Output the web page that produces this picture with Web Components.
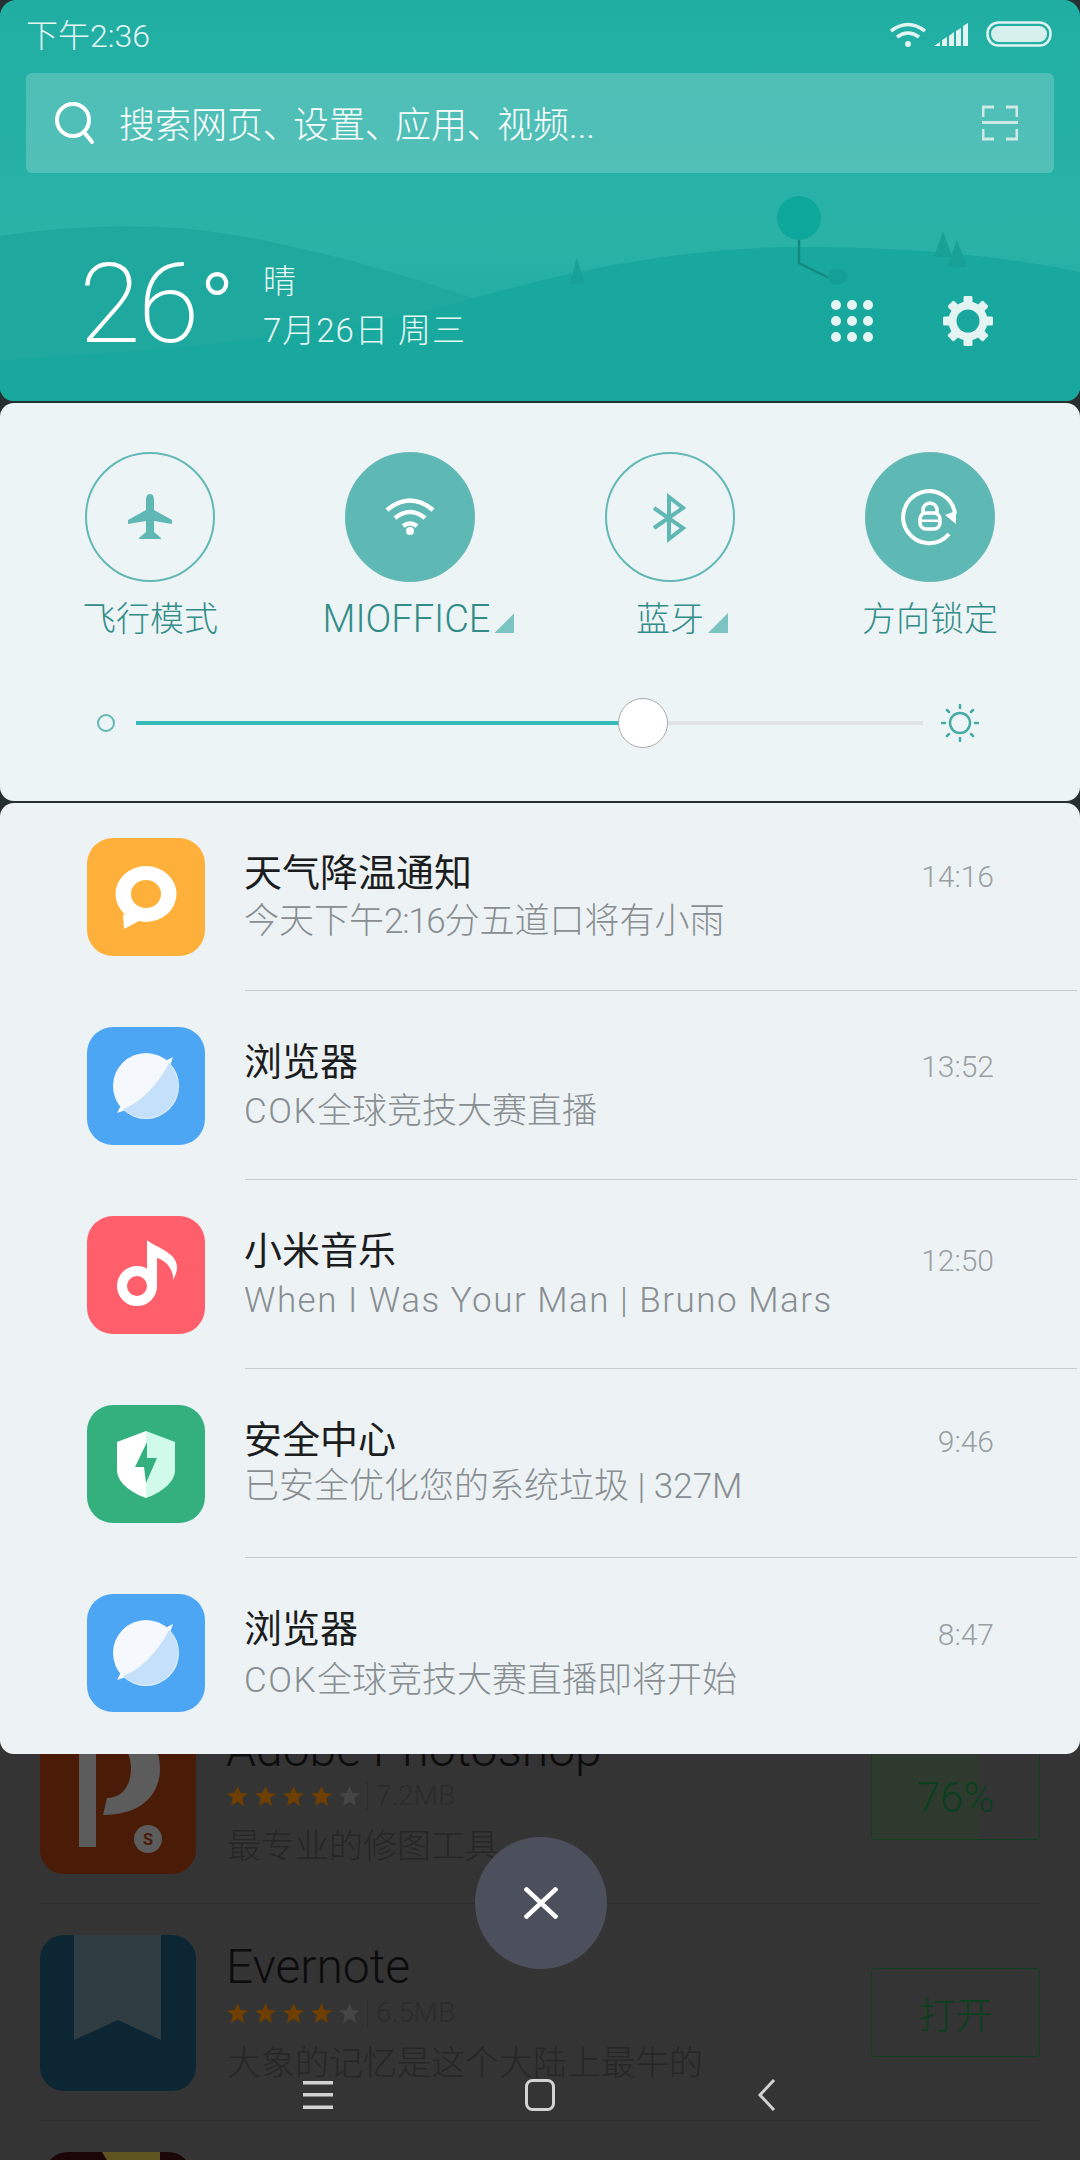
<!DOCTYPE html>
<html lang="zh">
<head>
<meta charset="utf-8">
<style>
    html, body {
        margin: 0;
        padding: 0;
    }

    body {
        position: relative;
        width: 1080px;
        height: 2160px;
        overflow: hidden;
        background: #343434;
        font-family: Roboto, "Noto Sans CJK SC", sans-serif;
    }

    .lat {
        letter-spacing: 1.5px;
    }

    .tight {
        letter-spacing: -1.3px;
    }
</style>
</head>
<body>
<bg-list>
    <bg-row app="ps" size="7.2MB" button="76%" progress="64"><span slot="name">Adobe Photoshop</span><span slot="desc">最专业的修图工具</span></bg-row>
    <bg-row app="evernote" size="6.5MB" button="打开"><span slot="name">Evernote</span><span slot="desc">大象的记忆是这个大陆上最牛的</span></bg-row>
    <bg-row app="third"></bg-row>
</bg-list>

<notif-shade>
    <weather-header></weather-header>
    <quick-panel>
        <toggle-button icon="plane" label="飞行模式"></toggle-button>
        <toggle-button icon="wifi" label="MIOFFICE" on more latin></toggle-button>
        <toggle-button icon="bluetooth" label="蓝牙" more></toggle-button>
        <toggle-button icon="lock" label="方向锁定" on></toggle-button>
    </quick-panel>
    <notif-list>
        <notif-row icon="weather" time="14:16" shift="39" dy="0"><span slot="title">天气降温通知</span><span slot="sub">今天下午<span class="tight">2:16</span>分五道口将有小雨</span></notif-row>
        <notif-row icon="browser" time="13:52" shift="40" dy="1"><span slot="title">浏览器</span><span slot="sub"><span class="lat">COK</span>全球竞技大赛直播</span></notif-row>
        <notif-row icon="music" time="12:50" shift="45" dy="1"><span slot="title">小米音乐</span><span slot="sub" class="lat">When I Was Your Man | Bruno Mars</span></notif-row>
        <notif-row icon="shield" time="9:46" shift="37" dy="-2"><span slot="title">安全中心</span><span slot="sub">已安全优化您的系统垃圾 | 327M</span></notif-row>
        <notif-row icon="browser" time="8:47" shift="41" dy="3"><span slot="title">浏览器</span><span slot="sub"><span class="lat">COK</span>全球竞技大赛直播即将开始</span></notif-row>
    </notif-list>
</notif-shade>

<close-button></close-button>
<nav-keys></nav-keys>

<script>
const toggleIcons = {
    plane: `<path fill="#5fb8b4" d="M65 42c-3 0-4 3-4 6v10L43 68v4l18-3v11l-7 6v1h22v-1l-7-6V69l18 3v-4L69 58V48c0-3-1-6-4-6z"/>`,
    wifi: `<g fill="none" stroke="#fff" stroke-width="4.5"><path d="M42 58q23-19 46 0"/><path d="M50 66q15-12 30 0"/><path d="M58 74q7-5 14 0"/></g><circle cx="65" cy="79" r="4" fill="#fff"/>`,
    bluetooth: `<path fill="none" stroke="#5fb8b4" stroke-width="4" d="M49 56l29 20-14 11V45l14 11-29 20"/>`,
    lock: `<g fill="none" stroke="#fff"><path stroke-width="4" d="M84 82A26 26 0 1 1 90 62"/><rect stroke-width="3.500" x="55" y="61" width="20" height="16" rx="6"/><path stroke-width="3.500" d="M58 61v-3a7 7 0 0 1 14 0v3"/></g><path fill="#fff" d="M80 63l11 9V59zM56 67.500h18v2.500H56z"/>`
};

const appIcons = {
    weather: `<rect width="118" height="118" rx="26" fill="#ffb03b"/>
        <path fill="#fff" d="M36 76l1 15 17-9z"/>
        <ellipse cx="59" cy="56" rx="30.5" ry="28" fill="#fff"/>
        <ellipse cx="59" cy="56" rx="15" ry="14" fill="#ffb03b"/>`,
    browser: `<rect width="118" height="118" rx="26" fill="#4da6f4"/>
        <circle cx="59" cy="59" r="33" fill="#f5f9fe"/>
        <path fill="#f5f9fe" d="M86 30L76 35l6 7zM30 86l5-10 7 6z"/>
        <path fill="#c5e0fb" d="M82 36C72 56 54 76 36 82A32.530 32.530 0 0 0 82 36z"/>`,
    music: `<rect width="118" height="118" rx="26" fill="#ff5f6b"/>
        <circle cx="50" cy="70" r="15" fill="none" stroke="#fff" stroke-width="10"/>
        <path fill="#fff" d="M60 24c6 6 30 12 30 27 0 5-2 9-4 13 1-11-8-20-16-22v28H60z"/>`,
    shield: `<rect width="118" height="118" rx="26" fill="#34b07f"/>
        <path fill="#fff" d="M59 26L30 37v28c0 13 15 23 29 28z"/>
        <path fill="#d0fae9" d="M59 26l29 11v28c0 13-15 23-29 28z"/>
        <path fill="#34b07f" d="M60 37L48 62h9l2 16 11-25H60z"/>`
};

class BgList extends HTMLElement {
    constructor() {
        super();
        this.shadowDOM = this.attachShadow({ mode: "open" });
        this.shadowDOM.innerHTML = `
        <style>
            :host {
                position: absolute;
                left: 40px;
                top: 1687px;
                width: 1000px;
                height: 473px;
                overflow: hidden;
                display: block;
            }
        </style>
        <slot></slot>`;
    }
}

class BgRow extends HTMLElement {
    constructor() {
        super();
        this.shadowDOM = this.attachShadow({ mode: "open" });
    }

    connectedCallback() {
        const app = this.getAttribute("app");
        const progress = this.getAttribute("progress");
        let icon = "";
        if (app === "ps") {
            icon = `<svg width="156" height="156"><rect width="156" height="156" rx="24" fill="#4a1c08"/>
                <path fill="#5c5c5c" d="M39 129V0h33c28 0 48 22 48 50s-20 47-57 47l4-17c15 0 24-12 24-30S80 20 56 20v109z"/>
                <circle cx="108" cy="121" r="14" fill="#5c5c5c"/>
                <text x="108" y="127" font-size="17" font-weight="700" text-anchor="middle" fill="#4a1c08">S</text></svg>`;
        } else if (app === "evernote") {
            icon = `<svg width="156" height="156"><rect width="156" height="156" rx="24" fill="#0c2633"/>
                <path fill="#2f3d42" d="M34 0h87v105L78 85l-44 20z"/></svg>`;
        } else {
            icon = `<svg width="156" height="156"><rect x="4" width="148" height="156" rx="24" fill="#1a0606"/>
                <path fill="#5e5420" d="M62 0h58v30H80z"/></svg>`;
        }

        let stars = "";
        for (let i = 0; i < 5; i++) {
            const fill = i < 4 ? "#6e3f00" : "#454545";
            stars += `<polygon transform="translate(${i * 28} 0)" fill="${fill}" points="10.5,0 13.5,7 21,7.5 15.3,12 17,20 10.5,15.7 4,20 5.7,12 0,7.5 7.5,7"/>`;
        }

        const hasText = this.hasAttribute("button");
        const isPercent = hasText && this.getAttribute("button").includes("%");
        this.shadowDOM.innerHTML = `
        <style>
            :host {
                display: block;
                height: 217px;
                box-sizing: border-box;
                border-bottom: 1px solid #2d2d2d;
            }

            .row {
                display: flex;
                padding-top: 31px;
            }

            .body {
                margin-left: 31px;
                flex: 1;
                padding-top: 10px;
            }

            .name {
                height: 44px;
                line-height: 44px;
                font-size: 48px;
                font-weight: 300;
                color: #0c0c0c;
                margin-left: -1px;
            }

            .meta {
                display: flex;
                align-items: center;
                height: 28px;
                margin-top: 10px;
                font-size: 28px;
                font-weight: 300;
                color: #2b2b2b;
            }

            .meta span {
                border-left: 1px solid #2b2b2b;
                margin-left: 8px;
                padding-left: 8px;
                line-height: 28px;
            }

            .desc {
                margin-top: 17px;
                line-height: 38px;
                font-size: 34px;
                font-weight: 300;
                color: #262626;
            }

            .btn {
                align-self: flex-start;
                width: 167px;
                height: 87px;
                margin-top: 33px;
                border: 1px solid #103f20;
                border-radius: 3px;
                display: flex;
                align-items: center;
                justify-content: center;
                font-size: ${isPercent ? "42px" : "37px"};
                font-weight: 300;
                color: #0a3f1e;
                background: ${progress ? `linear-gradient(to right, #2e3a2e ${progress}%, transparent ${progress}%)` : "none"};
            }

            .btn span {
                position: relative;
                top: ${isPercent ? "2px" : "0"};
            }
        </style>
        <div class="row">
            ${icon}
            ${hasText ? `
            <div class="body">
                <div class="name"><slot name="name"></slot></div>
                <div class="meta"><svg width="132" height="20">${stars}</svg><span>${this.getAttribute("size")}</span></div>
                <div class="desc"><slot name="desc"></slot></div>
            </div>
            <div class="btn"><span>${this.getAttribute("button")}</span></div>` : ""}
        </div>`;
    }
}

class NotifShade extends HTMLElement {
    constructor() {
        super();
        this.shadowDOM = this.attachShadow({ mode: "open" });
        this.shadowDOM.innerHTML = `
        <style>
            :host {
                position: relative;
                display: block;
                background: linear-gradient(#263030 0, #263030 815px, transparent 815px);
            }
        </style>
        <slot></slot>`;
    }
}

class WeatherHeader extends HTMLElement {
    constructor() {
        super();
        this.shadowDOM = this.attachShadow({ mode: "open" });
        this.render();
    }

    render() {
        let gearTeeth = "";
        for (let i = 0; i < 8; i++) {
            gearTeeth += `<rect x="20.5" y="0" width="9" height="10" rx="1.5" transform="rotate(${i * 45} 25 25)"/>`;
        }
        let dots = "";
        for (let r = 0; r < 3; r++) {
            for (let c = 0; c < 3; c++) {
                dots += `<circle cx="${5 + c * 16}" cy="${5 + r * 16}" r="5"/>`;
            }
        }

        this.shadowDOM.innerHTML = `
        <style>
            :host {
                position: relative;
                display: block;
                box-sizing: border-box;
                height: 401px;
                padding: 0 26px;
                border-radius: 16px 16px 14px 14px;
                overflow: hidden;
                background: linear-gradient(to bottom, #20aea3, #2ab2a7 60%, #19a89e);
                color: #e6f6f4;
            }

            .scene {
                position: absolute;
                left: 0;
                top: 0;
            }

            .status, .search, .weather {
                position: relative;
                display: flex;
                align-items: center;
            }

            .status {
                height: 73px;
                font-size: 32px;
                font-weight: 300;
                padding-bottom: 7px;
                box-sizing: border-box;
            }

            .status-icons {
                margin-left: auto;
                display: flex;
                margin-top: 4px;
            }

            .search {
                height: 100px;
                border-radius: 6px;
                background: rgba(255, 255, 255, .2);
                color: #fff;
                padding: 0 36px 0 29px;
                font-size: 36px;
                font-weight: 300;
            }

            .search .hint {
                margin-left: 24px;
                margin-top: -2px;
                font-feature-settings: "palt";
            }

            .search .hint span {
                margin-right: 12px;
            }

            .search svg:last-child {
                margin-left: auto;
            }

            .weather {
                margin-top: 75px;
                padding-left: 58px;
                height: 112px;
            }

            .temp {
                font-size: 112px;
                line-height: 112px;
                font-weight: 200;
                color: #fff;
                width: 180px;
                letter-spacing: -3px;
                margin-left: -5px;
            }

            .temp span {
                font-size: 94px;
                line-height: 86px;
                font-weight: 300;
                vertical-align: 2px;
                margin-left: 3px;
            }

            .info {
                font-size: 33px;
                font-weight: 300;
                margin-top: 5px;
                margin-left: 4px;
                letter-spacing: 1px;
            }

            .info div:first-child {
                margin-bottom: 9px;
            }

            .info div {
                line-height: 40px;
            }

            .apps {
                margin-left: auto;
                margin-top: 34px;
            }

            .gear {
                margin: 34px 61px 0 70px;
            }
        </style>
        <svg class="scene" width="1080" height="401">
            <path fill="#1fa89e" d="M0 236C80 224 160 222 240 236C340 254 440 285 520 315L0 401z"/>
            <path fill="#19a89e" d="M0 401V360Q280 345 440 308Q640 247 800 247Q960 247 1080 272V401z"/>
            <path fill="#18a197" d="M577 257l-7 27h14z"/>
            <path fill="#18a197" d="M943 231l-9 26h18zM957 240l-10 27h20z"/>
            <path fill="none" stroke="#138a81" stroke-width="2.5" d="M799 238v25l30 15"/>
            <ellipse cx="837" cy="277" rx="10" ry="8" fill="#14a096"/>
            <circle cx="799" cy="218" r="22" fill="#0ea79b"/>
        </svg>
        <div class="status">
            <span>下午2:36</span>
            <div class="status-icons">
                <svg width="164" height="30" fill="none" stroke="#e2f4f2">
                    <path stroke-width="3.5" d="M1 11q17-13 34 0"/>
                    <path stroke-width="3.5" d="M7 17q11-8 22 0"/>
                    <circle cx="18" cy="24" r="3" fill="#e2f4f2" stroke="none"/>
                    <path fill="#e2f4f2" stroke="none" d="M44 26l6-4v4zM52 20l5-3v9h-5zM59 16l5-4v14h-5zM66 11l5-3v18h-5zM73 6l5-3v23h-5z"/>
                    <rect x="97.5" y="2.5" width="63" height="23" rx="11" stroke-width="2.5"/>
                    <rect x="101" y="6" width="56" height="16" rx="8" fill="#d8f0ed" stroke="none"/>
                </svg>
            </div>
        </div>
        <div class="search">
            <svg width="40" height="44" fill="none" stroke="#fff" stroke-width="4"><circle cx="18" cy="19" r="16"/><path stroke-linecap="round" d="M29 31l8 10"/></svg>
            <div class="hint">搜索网页<span>、</span>设置<span>、</span>应用<span>、</span>视频...</div>
            <svg width="36" height="36" fill="none" stroke="#cdeae6" stroke-width="3"><path d="M1 12V2h11M24 2h11v10M0 17.500h36M1 24v10h11M24 34h11V24"/></svg>
        </div>
        <div class="weather">
            <div class="temp">26<span>°</span></div>
            <div class="info"><div>晴</div><div>7月26日 周三</div></div>
            <svg class="apps" width="42" height="42" fill="#e4f4f2">${dots}</svg>
            <svg class="gear" width="50" height="50" fill="#e4f4f2"><g>${gearTeeth}</g><circle cx="25" cy="25" r="15.500" fill="none" stroke="#e4f4f2" stroke-width="8"/></svg>
        </div>`;
    }
}

class QuickPanel extends HTMLElement {
    constructor() {
        super();
        this.shadowDOM = this.attachShadow({ mode: "open" });
        this.shadowDOM.innerHTML = `
        <style>
            :host {
                display: block;
                box-sizing: border-box;
                height: 398px;
                margin-top: 2px;
                padding: 49px 20px 0;
                border-radius: 14px;
                background: #edf4f6;
            }

            .grid {
                display: grid;
                grid-template-columns: repeat(4, 260px);
            }

            .slider {
                display: flex;
                align-items: center;
                height: 50px;
                margin-top: 57px;
                padding-left: 77px;
            }

            .min {
                width: 14px;
                height: 14px;
                border: 2px solid #5fb8b4;
                border-radius: 50%;
            }

            .track {
                position: relative;
                width: 787px;
                height: 4px;
                margin: 0 18px 0 21px;
                background: linear-gradient(to right, #35bcb9 64%, #dfe3e5 64%);
            }

            .knob {
                position: absolute;
                left: 482px;
                top: -23px;
                box-sizing: border-box;
                width: 50px;
                height: 50px;
                border: 1px solid #a9a9a9;
                border-radius: 50%;
                background: #fff;
            }
        </style>
        <div class="grid"><slot></slot></div>
        <div class="slider">
            <div class="min"></div>
            <div class="track"><div class="knob"></div></div>
            <svg width="38" height="38" fill="none" stroke="#46aaa6" stroke-width="2.5" stroke-linecap="round">
                <circle cx="19" cy="19" r="10"/>
                <path d="M19 1v3M19 34v3M1 19h3M34 19h3M6 6l2 2M30 30l2 2M32 6l-2 2M8 30l-2 2"/>
            </svg>
        </div>`;
    }
}

class ToggleButton extends HTMLElement {
    constructor() {
        super();
        this.shadowDOM = this.attachShadow({ mode: "open" });
    }

    connectedCallback() {
        const on = this.hasAttribute("on");
        const more = this.hasAttribute("more");
        const latin = this.hasAttribute("latin");
        this.shadowDOM.innerHTML = `
        <style>
            :host {
                display: flex;
                flex-direction: column;
                align-items: center;
            }

            .circle {
                width: 130px;
                height: 130px;
                box-sizing: border-box;
                border-radius: 50%;
                border: 2px solid #62b9b5;
                background: ${on ? "#5eb9b5" : "transparent"};
                position: relative;
            }

            .circle svg {
                position: absolute;
                left: -2px;
                top: -2px;
            }

            .label {
                position: relative;
                margin-top: 15px;
                line-height: 44px;
                font-size: ${latin ? "38px" : "34px"};
                font-weight: 300;
                color: #328d89;
                ${latin ? "margin-right: 7px;" : ""}
            }

            .more {
                position: absolute;
                right: -24px;
                bottom: 8px;
                width: 20px;
                height: 20px;
                background: #7cc4c1;
                clip-path: polygon(100% 0, 100% 100%, 0 100%);
            }
        </style>
        <div class="circle"><svg width="130" height="130">${toggleIcons[this.getAttribute("icon")]}</svg></div>
        <div class="label">${this.getAttribute("label")}${more ? `<div class="more"></div>` : ""}</div>`;
    }
}

class NotifList extends HTMLElement {
    constructor() {
        super();
        this.shadowDOM = this.attachShadow({ mode: "open" });
        this.shadowDOM.innerHTML = `
        <style>
            :host {
                display: block;
                box-sizing: border-box;
                height: 951px;
                margin-top: 2px;
                padding-top: 35px;
                border-radius: 14px;
                background: #edf3f5;
            }
        </style>
        <slot></slot>`;
    }
}

class NotifRow extends HTMLElement {
    constructor() {
        super();
        this.shadowDOM = this.attachShadow({ mode: "open" });
    }

    connectedCallback() {
        const shift = this.getAttribute("shift");
        const dy = this.getAttribute("dy");
        this.shadowDOM.innerHTML = `
        <style>
            :host {
                display: block;
                height: 189px;
                padding-left: 87px;
                box-sizing: border-box;
            }

            :host(:last-child) .line {
                display: none;
            }

            .row {
                display: flex;
                height: 152px;
            }

            .text {
                margin-left: 39px;
                width: 620px;
                flex: none;
            }

            .title {
                margin-top: 13px;
                line-height: 44px;
                font-size: 38px;
                font-weight: 400;
                color: #1b1d1e;
            }

            .sub {
                margin-top: ${5 + Number(dy)}px;
                line-height: 44px;
                font-size: 35px;
                font-weight: 300;
                color: #888e91;
            }

            .time {
                width: 130px;
                padding-top: ${shift - 20}px;
                line-height: 40px;
                text-align: right;
                font-size: 30px;
                font-weight: 300;
                color: #999fa2;
            }

            .line {
                height: 1px;
                margin: 0 3px 0 158px;
                background: #c6cbcd;
            }
        </style>
        <div class="row">
            <svg width="118" height="118" viewBox="0 0 118 118">${appIcons[this.getAttribute("icon")]}</svg>
            <div class="text">
                <div class="title"><slot name="title"></slot></div>
                <div class="sub"><slot name="sub"></slot></div>
            </div>
            <div class="time">${this.getAttribute("time")}</div>
        </div>
        <div class="line"></div>`;
    }
}

class CloseButton extends HTMLElement {
    constructor() {
        super();
        this.shadowDOM = this.attachShadow({ mode: "open" });
        this.shadowDOM.innerHTML = `
        <style>
            :host {
                position: absolute;
                left: 475px;
                top: 1837px;
                width: 132px;
                height: 132px;
                border-radius: 50%;
                background: #4b505c;
                display: flex;
                align-items: center;
                justify-content: center;
            }
        </style>
        <svg width="34" height="32" fill="none" stroke="#fff" stroke-width="4.500"><path d="M1 1l32 30M33 1L1 31"/></svg>`;
    }
}

class NavKeys extends HTMLElement {
    constructor() {
        super();
        this.shadowDOM = this.attachShadow({ mode: "open" });
        this.shadowDOM.innerHTML = `
        <style>
            :host {
                position: absolute;
                left: 303px;
                top: 2079px;
                display: flex;
                align-items: center;
                height: 32px;
            }

            .home {
                margin: 0 202px 0 192px;
            }
        </style>
        <svg width="30" height="28" fill="#d2d2d2"><rect width="30" height="3.500"/><rect y="12" width="30" height="3.500"/><rect y="24.500" width="30" height="3.500"/></svg>
        <svg class="home" width="30" height="32" fill="none" stroke="#d2d2d2" stroke-width="3"><rect x="1.500" y="1.500" width="27" height="29" rx="6"/></svg>
        <svg width="19" height="32" fill="none" stroke="#d2d2d2" stroke-width="3"><path d="M17 1L3 16l14 15"/></svg>`;
    }
}

customElements.define("bg-list", BgList);
customElements.define("bg-row", BgRow);
customElements.define("notif-shade", NotifShade);
customElements.define("weather-header", WeatherHeader);
customElements.define("quick-panel", QuickPanel);
customElements.define("toggle-button", ToggleButton);
customElements.define("notif-list", NotifList);
customElements.define("notif-row", NotifRow);
customElements.define("close-button", CloseButton);
customElements.define("nav-keys", NavKeys);
</script>
</body>
</html>
